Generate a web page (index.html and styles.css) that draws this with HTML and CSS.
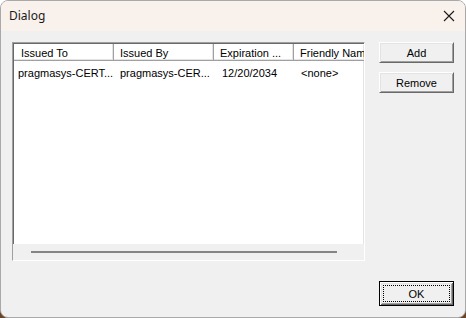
FILE: index.html
```html
<!DOCTYPE html>
<html lang="en">
<head>
    <meta charset="UTF-8">
    <title>Dialog</title>
    <link rel="stylesheet" href="styles.css">
</head>
<body>
    <!-- dialog window -->
    <div class="window">
        <div class="titlebar">
            <span class="title">Dialog</span>
            <span class="close-btn">
                <svg width="12" height="12" viewBox="0 0 12 12">
                    <path d="M1 1 L11 11 M11 1 L1 11" stroke="#1a1a1a" stroke-width="1.1" fill="none"/>
                </svg>
            </span>
        </div>

        <div class="client">
            <div class="top-row">
                <!-- certificate list -->
                <div class="listview">
                    <div class="lv-header">
                        <div class="hcell col-to">Issued To</div>
                        <div class="hcell col-by">Issued By</div>
                        <div class="hcell col-exp">Expiration ...</div>
                        <div class="hcell col-name">Friendly Name</div>
                    </div>
                    <div class="lv-body">
                        <div class="lv-row">
                            <div class="cell col-to">pragmasys-CERT...</div>
                            <div class="cell col-by">pragmasys-CER...</div>
                            <div class="cell col-exp">12/20/2034</div>
                            <div class="cell col-name">&lt;none&gt;</div>
                        </div>
                    </div>
                    <div class="hscroll"><div class="thumb"></div></div>
                </div>

                <div class="side-buttons">
                    <button class="btn">Add</button>
                    <button class="btn">Remove</button>
                </div>
            </div>

            <div class="bottom-row">
                <button class="btn btn-default"><span class="focus-rect">OK</span></button>
            </div>
        </div>
    </div>
</body>
</html>
```

FILE: styles.css
```css
* {
    margin: 0;
    padding: 0;
    box-sizing: border-box;
}

body {
    width: 466px;
    height: 318px;
    overflow: hidden;
    background: linear-gradient(#ffffff 0, #ffffff 140px, #7a5232 150px, #6a4427 100%);
    font-family: "Liberation Sans", Arial, sans-serif;
    font-size: 11px;
    color: #000;
}

/* window frame */
.window {
    width: 466px;
    height: 318px;
    border: 1px solid #a9a9a9;
    border-radius: 8px;
    overflow: hidden;
    background: #f0f0f0;
    display: flex;
    flex-direction: column;
}

.titlebar {
    height: 30px;
    background: #f9f1ec;
    display: flex;
    align-items: center;
    justify-content: space-between;
    padding: 0 9px 0 8px;
}

.title {
    font-family: "Noto Sans", "Open Sans", sans-serif;
    font-size: 12px;
    color: #1a1a1a;
    margin-top: -1px;
}

.close-btn {
    display: flex;
    width: 12px;
    height: 12px;
    margin-right: 1px;
}

/* client area */
.client {
    flex: 1;
    padding: 11px 11px 11px 11px;
    display: flex;
    flex-direction: column;
}

.top-row {
    display: flex;
    gap: 14px;
}

/* list view */
.listview {
    width: 353px;
    height: 219px;
    background: #fff;
    border-style: solid;
    border-width: 1px;
    border-color: #a0a0a0 #ffffff #ffffff #a0a0a0;
    box-shadow: inset 1px 1px 0 #696969, inset -1px -1px 0 #e3e3e3;
    display: flex;
    flex-direction: column;
    overflow: hidden;
    padding: 1px;
}

.lv-header {
    display: flex;
    height: 17px;
    background: #fff;
    flex-shrink: 0;
}

.hcell {
    flex-shrink: 0;
    white-space: nowrap;
    overflow: hidden;
    padding: 3px 0 0 6px;
    border-right: 1px solid #a0a0a0;
    border-bottom: 1px solid #a0a0a0;
    box-shadow: inset -1px -1px 0 #e3e3e3, inset 1px 1px 0 #ffffff;
}

.col-to { width: 100px; }
.col-by { width: 100px; }
.col-exp { width: 80px; }
.col-name { width: 80px; }

.hcell.col-to { padding-left: 7px; }

.lv-body {
    flex: 1;
}

.lv-row {
    display: flex;
    height: 17px;
    align-items: center;
    margin-top: 3px;
}

.cell {
    flex-shrink: 0;
    white-space: nowrap;
    overflow: hidden;
    padding-left: 6px;
}

.cell.col-to { padding-left: 4px; }
.cell.col-exp { padding-left: 8px; }
.cell.col-name { padding-left: 7px; }

.hscroll {
    height: 16px;
    margin: 0 -1px -1px -1px;
    background: #f0f0f0;
    flex-shrink: 0;
    display: flex;
    align-items: center;
    padding-left: 18px;
}

.thumb {
    width: 306px;
    height: 2px;
    background: #858585;
}

/* buttons */
.side-buttons {
    display: flex;
    flex-direction: column;
    gap: 9px;
}

.btn {
    width: 75px;
    height: 21px;
    font-family: "Liberation Sans", Arial, sans-serif;
    font-size: 11px;
    color: #000;
    background: #f0f0f0;
    border-style: solid;
    border-width: 1px;
    border-color: #ffffff #696969 #696969 #ffffff;
    box-shadow: inset 1px 1px 0 #e3e3e3, inset -1px -1px 0 #a0a0a0;
    display: flex;
    align-items: center;
    justify-content: center;
}

.bottom-row {
    margin-top: auto;
    display: flex;
    justify-content: flex-end;
    padding-bottom: 0;
}

.btn-default {
    height: 25px;
    border: 1px solid #000;
    box-shadow: inset 1px 1px 0 #ffffff, inset -1px -1px 0 #696969, inset 2px 2px 0 #e3e3e3, inset -2px -2px 0 #a0a0a0;
    padding: 3px;
}

.focus-rect {
    flex: 1;
    align-self: stretch;
    border: 1px dotted #000;
    display: flex;
    align-items: center;
    justify-content: center;
}
```
